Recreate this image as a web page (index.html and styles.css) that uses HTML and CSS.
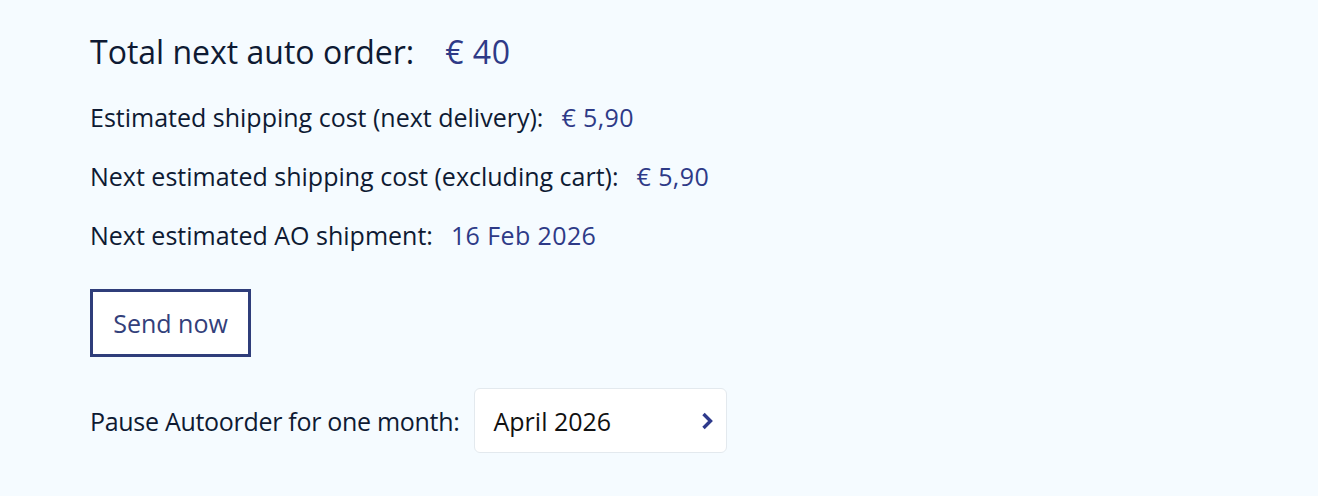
FILE: index.html
```html
<!DOCTYPE html>
<html lang="en">
<head>
<meta charset="utf-8">
<title>Auto order</title>
<link rel="stylesheet" href="styles.css">
</head>
<body>
<main class="panel">
  <div class="total">
    <span class="total-label">Total next auto order:</span>
    <span class="total-value">€ 40</span>
  </div>
  <div class="row">
    <span class="label">Estimated shipping cost (next delivery):</span>
    <span class="value">€ 5,90</span>
  </div>
  <div class="row">
    <span class="label">Next estimated shipping cost (excluding cart):</span>
    <span class="value">€ 5,90</span>
  </div>
  <div class="row">
    <span class="label">Next estimated AO shipment:</span>
    <span class="value">16 Feb 2026</span>
  </div>
  <button class="send" type="button">Send now</button>
  <div class="pause">
    <span class="label pause-label">Pause Autoorder for one month:</span>
    <div class="select">
      <span class="select-text">April 2026</span>
      <svg class="chev" width="13" height="20" viewBox="0 0 13 20"><path d="M2.5 3 L9.5 10 L2.5 17" fill="none" stroke="#2e3a8c" stroke-width="3.4"/></svg>
    </div>
  </div>
</main>
</body>
</html>
```
FILE: styles.css
```css
html, body {
  margin: 0;
  padding: 0;
  background: #f5fbff;
}
body {
  font-family: "Open Sans", "Noto Sans", sans-serif;
  color: #0e1a33;
}
.panel {
  padding: 31px 0 0 90px;
  display: flex;
  flex-direction: column;
  align-items: flex-start;
}
.total {
  display: flex;
  align-items: baseline;
  gap: 31px;
  font-size: 32px;
  line-height: 42px;
  margin-bottom: 29px;
}
.total-label { color: #0e1a33; }
.total-value { color: #2e3a87; letter-spacing: 0.5px; }
.row {
  display: flex;
  align-items: baseline;
  gap: 18px;
  font-size: 25px;
  line-height: 30px;
  margin-bottom: 29px;
}
.value { color: #2e3a87; letter-spacing: 0.4px; }
.send {
  margin-top: 10px;
  width: 161px;
  height: 68px;
  border: 3px solid #2f3d7a;
  background: #ffffff;
  color: #33407a;
  font-family: "Open Sans", "Noto Sans", sans-serif;
  font-size: 25px;
  padding: 0;
  cursor: pointer;
}
.pause {
  margin-top: 31px;
  display: flex;
  align-items: center;
  gap: 14px;
  font-size: 25px;
}
.pause-label { letter-spacing: -0.3px; }
.select {
  width: 253px;
  height: 65px;
  box-sizing: border-box;
  border: 1px solid #e3e9ee;
  border-radius: 6px;
  background: #ffffff;
  display: flex;
  align-items: center;
  justify-content: space-between;
  padding: 0 12px 0 19px;
}
.select-text {
  font-family: "Open Sans", "Noto Sans", sans-serif;
  font-size: 25px;
  color: #111111;
}
.chev { display: block; }
```
